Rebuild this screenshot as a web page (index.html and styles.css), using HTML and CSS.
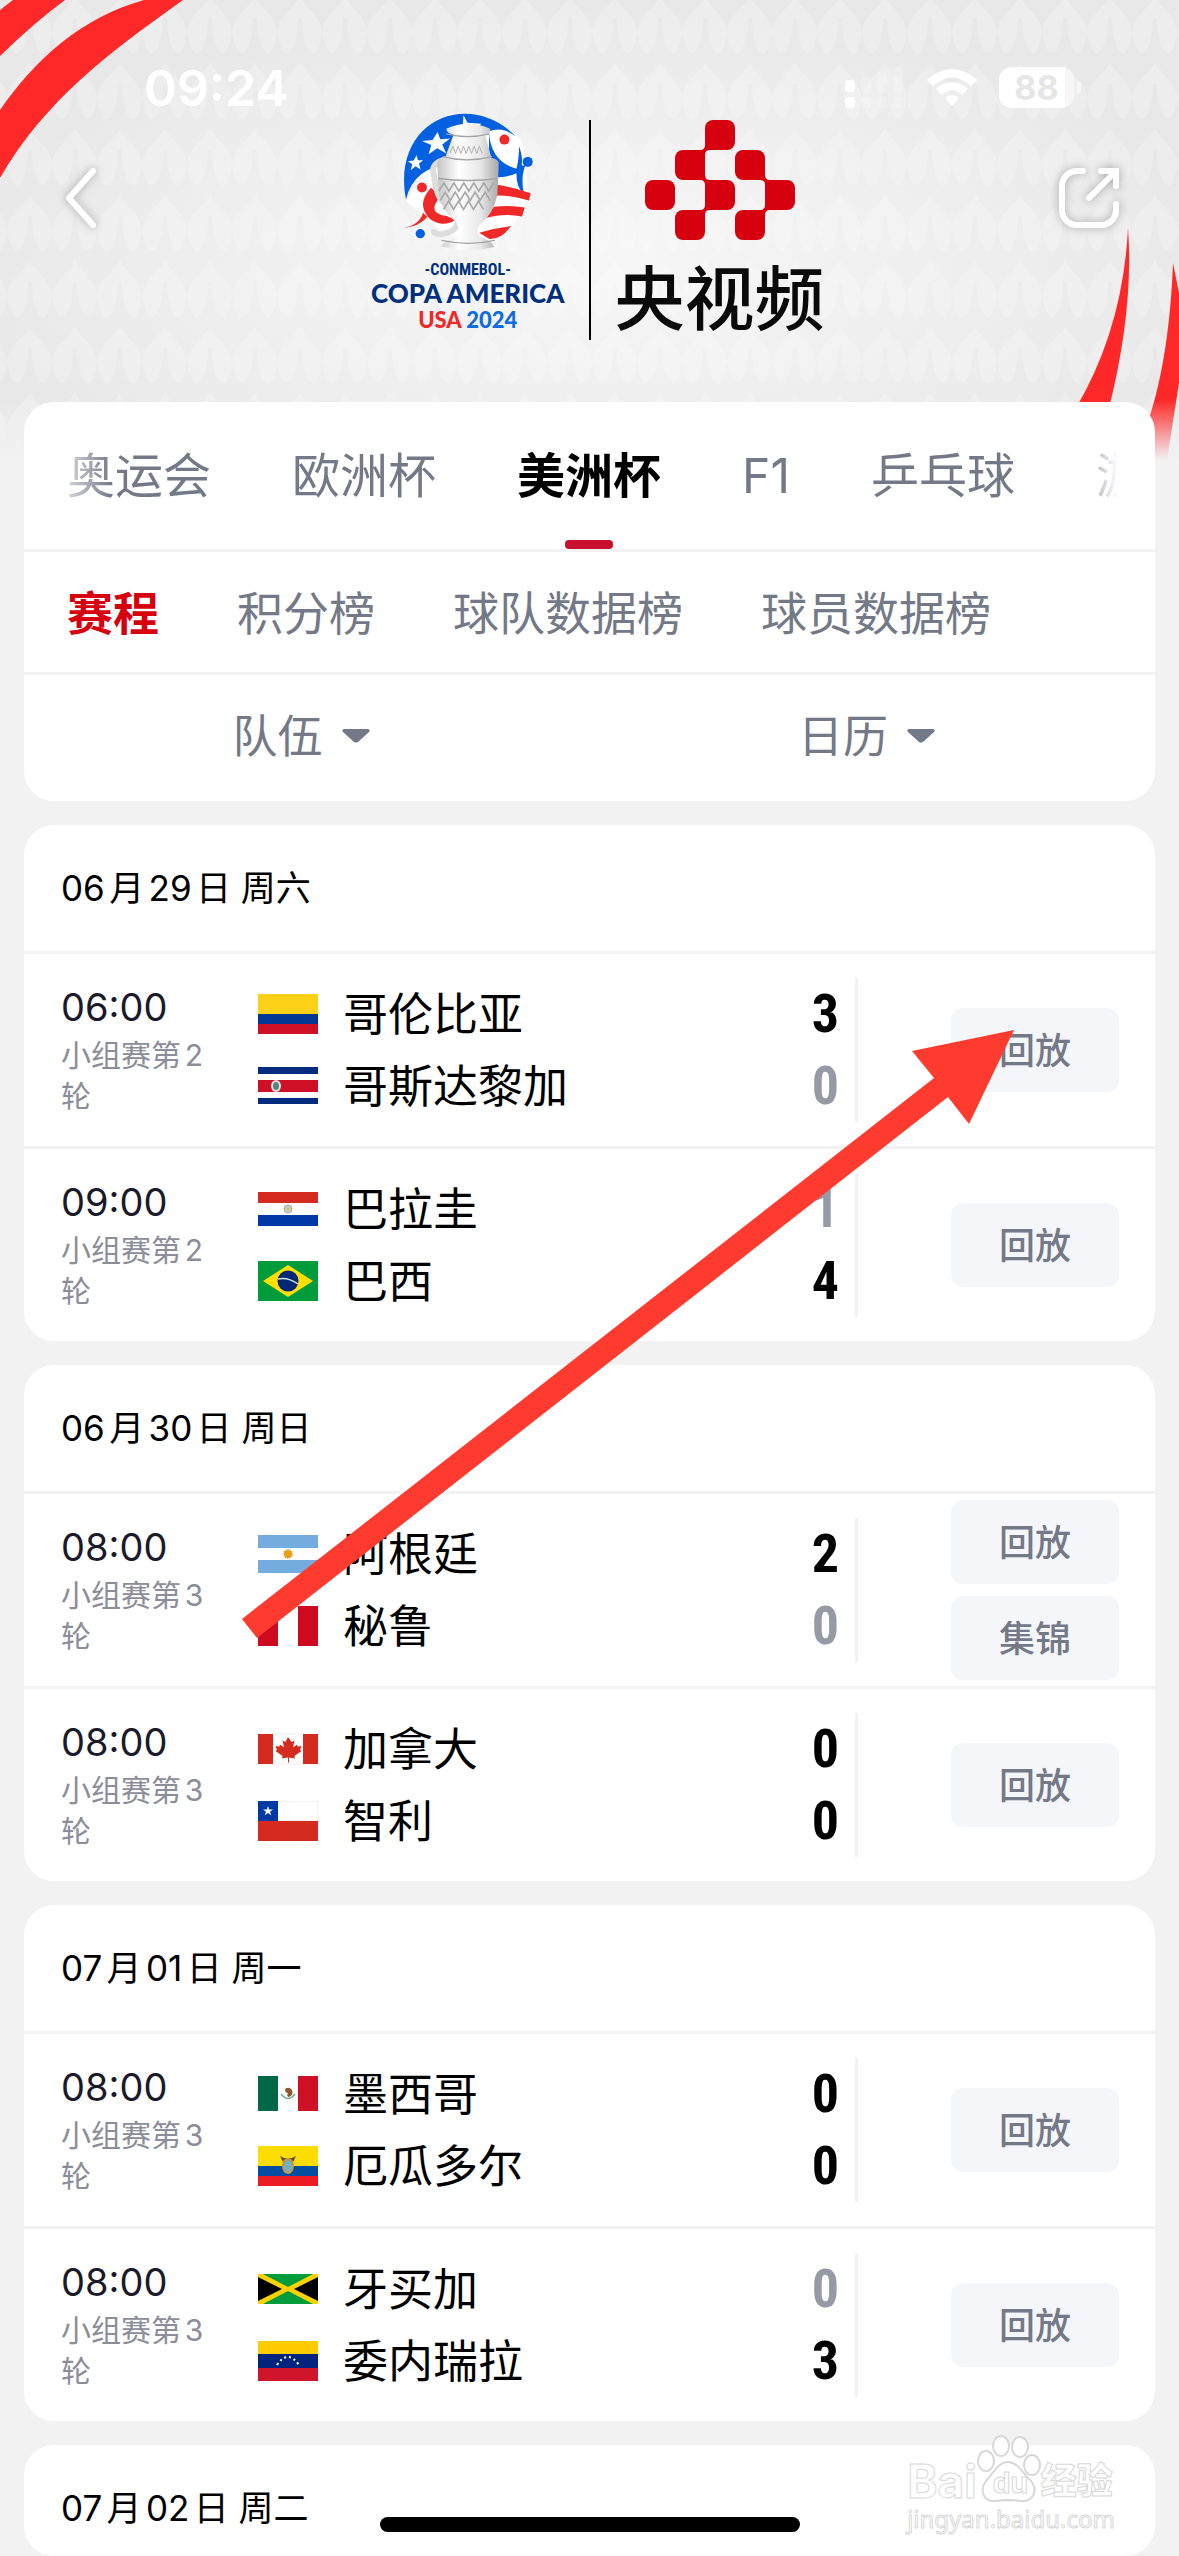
FILE: index.html
```html
<!DOCTYPE html>
<html lang="zh-CN">
<head>
  <meta charset="UTF-8" />
  <meta name="viewport" content="width=device-width, initial-scale=1.0" />
  <title>美洲杯赛程 - 央视频</title>
  <link rel="stylesheet" href="styles.css">
</head>
<body>
  <!-- flags -->
  <svg class="defs" width="0" height="0" aria-hidden="true">
    <symbol id="co" viewBox="0 0 60 40"><path fill="#fcd116" d="M0 0h60v20H0z"/><path fill="#003893" d="M0 20h60v10H0z"/><path fill="#ce1126" d="M0 30h60v10H0z"/></symbol>
    <symbol id="cr" viewBox="0 0 60 40"><path fill="#fff" d="M0 1h60v37H0z"/><path fill="#002b7f" d="M0 1h60v7H0zM0 32h60v6H0z"/><path fill="#ce1126" d="M0 14h60v12H0z"/><ellipse cx="18" cy="20" rx="5" ry="6" fill="#ece5d8"/><ellipse cx="18" cy="20" rx="3" ry="4" fill="#4c8a87"/></symbol>
    <symbol id="py" viewBox="0 0 60 40"><path fill="#fff" d="M0 3h60v34H0z"/><path fill="#d52b1e" d="M0 3h60v11H0z"/><path fill="#0038a8" d="M0 26h60v11H0z"/><circle cx="30" cy="20" r="4" fill="#c9d0c4" stroke="#aaa"/><circle cx="30" cy="20" r="1.500" fill="#d8c640"/></symbol>
    <symbol id="br" viewBox="0 0 60 40"><path fill="#009b3a" d="M0 0h60v40H0z"/><path fill="#fedf00" d="M30 4 55 20 30 36 5 20z"/><circle cx="30" cy="20" r="10.500" fill="#002776"/><path fill="none" stroke="#cfe6dc" stroke-width="1.500" d="M20 18q10-2 20 5"/></symbol>
    <symbol id="ar" viewBox="0 0 60 40"><path fill="#fff" d="M0 1h60v38H0z"/><path fill="#74acdf" d="M0 1h60v13H0zM0 26h60v13H0z"/><circle cx="30" cy="20" r="4" fill="#e8a30c" stroke="#d9a553" stroke-dasharray="1 1" stroke-width="2"/></symbol>
    <symbol id="pe" viewBox="0 0 60 40"><path fill="#fff" d="M0 0h60v40H0z"/><path fill="#ce0a20" d="M0 0h20v40H0zM40 0h20v40H40z"/></symbol>
    <symbol id="ca" viewBox="0 0 60 40"><path fill="#fff" stroke="#eee" d="M1 5h58v30H1z"/><path fill="#d52b1e" d="M0 5h15v30H0zM45 5h15v30H45zM30 8l-2.500 5-3-1.500 1.500 7-4-3-.5 2-4-.5 1.500 4-1.500 1 7 5-.5 2.500 6-1v5h1v-5l6 1-.5-2.500 7-5-1.500-1 1.500-4-4 .5-.5-2-4 3 1.500-7-3 1.500z"/></symbol>
    <symbol id="cl" viewBox="0 0 60 40"><path fill="#fff" stroke="#e6e6e6" d="M0 0h60v20H0z"/><path fill="#d52b1e" d="M0 20h60v20H0z"/><path fill="#0039a6" d="M0 0h20v20H0z"/><path fill="#fff" d="M10 5l1.200 3.500H15l-3 2.200 1.200 3.500-3.200-2.200-3.200 2.200L8 10.700 5 8.500h3.800z"/></symbol>
    <symbol id="mx" viewBox="0 0 60 40"><path fill="#fff" d="M0 2h60v35H0z"/><path fill="#006847" d="M0 2h20v35H0z"/><path fill="#ce1126" d="M40 2h20v35H40z"/><path fill="#8c5a2e" d="M27 15q4-3 7 1 2 5-3 7-3-1-1-4-3 0-3-4z"/><path fill="none" stroke="#6fae9a" stroke-width="1.500" d="M23 20q7 9 14 0"/></symbol>
    <symbol id="ec" viewBox="0 0 60 40"><path fill="#ffdd00" d="M0 0h60v20H0z"/><path fill="#034ea2" d="M0 20h60v10H0z"/><path fill="#ed1c24" d="M0 30h60v10H0z"/><path fill="#5b4a1e" d="M22 10q8 5 16 0l-3 6H25z"/><ellipse cx="30" cy="20" rx="6" ry="8" fill="#c8963e"/><ellipse cx="30" cy="20" rx="4" ry="6" fill="#6fb3c4"/></symbol>
    <symbol id="jm" viewBox="0 0 60 40"><path fill="#009b3a" d="M0 5h60v30H0z"/><path d="M0 5l28 15L0 35zM60 5 32 20l28 15z"/><path fill="#fed100" d="M0 5h5l25 13L55 5h5v3L36 20l24 12v3h-5L30 22 5 35H0v-3l24-12L0 8z"/></symbol>
    <symbol id="ve" viewBox="0 0 60 40"><path fill="#fc0" d="M0 0h60v14H0z"/><path fill="#00247d" d="M0 13h60v14H0z"/><path fill="#cf142b" d="M0 27h60v13H0z"/><path fill="none" stroke="#fff" stroke-width="2" stroke-dasharray="2 3" d="M19 24q11-16 22 0"/></symbol>
  </svg>

  <svg class="backdrop" viewBox="0 0 1179 480" aria-hidden="true">
    <defs>
      <radialGradient id="glow" cx=".5" cy=".55" r=".55">
        <stop offset="0" stop-color="#f7f7f7"/>
        <stop offset="1" stop-color="#e8e8e8"/>
      </radialGradient>
      <linearGradient id="fade" x1="0" y1="0" x2="0" y2="1">
        <stop offset="0" stop-color="#f2f2f2" stop-opacity="0"/>
        <stop offset="1" stop-color="#f2f2f2"/>
      </linearGradient>
      <pattern id="leaves" x="7" y="-4" width="45" height="66" patternUnits="userSpaceOnUse">
        <path fill="#fff" fill-opacity=".2" d="M23 0C18 12 2 18 0 36c1 9 5 18 8 21 8 2 13-16 13-35h4c0 19 5 37 13 35 3-3 6-12 7-21C43 18 28 12 23 0z"/>
      </pattern>
    </defs>
    <path fill="url(#glow)" d="M0 0h1179v480H0z"/>
    <path fill="url(#leaves)" d="M0 0h1179v480H0z"/>
    <!-- ribbons in the corners -->
    <g fill="#ff2828">
      <path d="M13 0h52Q35 22 0 56V10z"/>
      <path d="M144 0h39C110 52 45 100 0 178v-68C35 60 80 18 144 0z"/>
      <path d="M1128 228q6 80-19 180h-33q47-80 52-180z"/>
      <path d="M1173 263l6 30v90l-12 77h-35q36-70 41-197z"/>
    </g>
    <path fill="url(#fade)" d="M0 400h1179v60H0z"/>
    <path fill="#f2f2f2" d="M0 459h1179v21H0z"/>
  </svg>

  <header class="top">
    <div class="status">
      <span class="clock">09:24</span>
      <div class="status-icons">
        <svg width="60" height="42" viewBox="0 0 60 42" fill="#fff">
          <rect y="13" width="10" height="12" rx="4"/><rect y="30" width="10" height="11" rx="4"/>
          <g opacity=".2"><rect x="16" y="10" width="10" height="16" rx="4"/><rect x="32" y="5" width="10" height="21" rx="4"/><rect x="48" width="10" height="26" rx="4"/><rect x="16" y="30" width="10" height="11" rx="4"/><rect x="32" y="30" width="10" height="11" rx="4"/><rect x="48" y="30" width="10" height="11" rx="4"/></g>
        </svg>
        <svg width="50" height="38" viewBox="0 0 50 38" fill="#fff">
          <path d="M0 11Q25-11 50 11l-6 6Q25 0 6 17z"/><path d="M9 20q16-14 32 0l-6 6q-10-9-20 0z"/><path d="M18 29q7-6 14 0l-7 8z"/>
        </svg>
        <span class="battery">88</span>
      </div>
    </div>
    <div class="banner">
      <button class="icon-button" aria-label="返回">
        <svg width="44" height="60" viewBox="0 0 44 60"><path d="M33 3 9 30l24 27" fill="none" stroke="#fff" stroke-width="6" stroke-linecap="round" stroke-linejoin="round"/></svg>
      </button>
      <div class="brand">
        <div class="copa">
          <svg width="133" height="138" viewBox="150 65 400 415">
            <defs>
              <linearGradient id="silver"><stop offset="0" stop-color="#c4c4c4"/><stop offset=".35" stop-color="#fff"/><stop offset=".7" stop-color="#e8e8e8"/><stop offset="1" stop-color="#a9a9a9"/></linearGradient>
            </defs>
            <path fill="#fff" d="M165 330Q240 230 300 110l110 10q100-20 110 60l15 140-50 90-80 40-120-20z"/>
            <path fill="#0360e0" d="M165 325C120 90 350-10 495 135 460 110 440 112 415 120L300 220Q190 225 165 325z"/>
            <path fill="#fff" d="M338 72l12 22 42 3-18 15 8 25-80-20 34-15zM260 122l8 22 30-2-24 18 12 27-27-16-26 18 8-28-28-12 32-3zM197 192l4 15 16 0-13 10 5 18-15-10-15 12 5-18-13-9 17-2z"/>
            <path fill="#0360e0" d="M415 125q5 85 82 108 8-30 8-68 12 32 8 55 5 10 14-4-18 35-8 90-22-15-22-60-50 22-83 4z"/>
            <path fill="#fff" d="M422 130q10 50 72 94 4-34-2-84-30-24-70-10z"/>
            <circle cx="531" cy="212" r="15" fill="#0360e0"/><circle cx="461" cy="145" r="15" fill="#f02828"/>
            <path fill="#f02828" d="M430 280q50 5 110 26l-5 22q-60-18-110-14zM430 347q45-6 92 2l-8 27q-60-12-118 8zM385 425q50-15 96-20-28 40-65 39z"/>
            <path fill="#f02828" d="M240 290q-45 50-5 92 40 30 78 5l-25-12q-65-10-18-60zM157 410q45-5 60-45l12 13q-25 30-72 32z"/>
            <circle cx="213" cy="289" r="15" fill="#f02828"/><circle cx="208" cy="428" r="14" fill="#0360e0"/>
            <path fill="none" stroke="#ddd" stroke-width="18" d="M285 205q-50 10-35 50 5 60 30 80M315 370q20 50-45 60-25 0-20-15"/>
            <path fill="url(#silver)" d="M286 112q66-30 132 0 2 16-15 20l19 68q22 4 22 16l-4 94q-12 60-54 92-20 30 25 46 12 6 20 20-80 20-160-2 10-16 30-20 35-20 14-54-45-35-52-86l-4-90q2-16 25-20l24-66q-20-4-22-18z"/>
            <path fill="none" stroke="#a4a4a4" stroke-width="4" d="M286 128q66 16 130 0M276 196q72 20 148 0M262 262q90 12 180 0M272 448q80 18 160 0"/>
            <path fill="none" stroke="#b0b0b0" stroke-width="3" d="M298 185l8-20 8 22 8-22 8 22 8-22 8 22 8-22 8 22 8-22 8 22 8-22 8 22"/>
            <path fill="none" stroke="#a8a8a8" stroke-width="5" d="M264 300l15-25 15 25 15-25 15 25 15-25 15 25 15-25 15 25 15-25 15 25 15-25M268 328l15-25 15 25 15-25 15 25 15-25 15 25 15-25 15 25 15-25 15 25M278 355l15-25 15 25 15-25 15 25 15-25 15 25 15-25 15 25"/>
          </svg>
          <span class="conmebol">-CONMEBOL-</span>
          <span class="copa-name">COPA AMERICA</span>
          <span class="copa-year"><b>USA</b> 2024</span>
        </div>
        <div class="brand-line"></div>
        <div class="yangshipin">
          <svg width="150" height="120" viewBox="0 0 150 120" fill="#d7000f">
            <defs>
              <path id="joint" d="M0-8h8v8H5Q0 0 0 5v3h-8V0h3Q0 0 0-5z"/>
            </defs>
            <rect x="60" width="30" height="30" rx="8"/><rect x="30" y="30" width="30" height="30" rx="8"/><rect x="90" y="30" width="30" height="30" rx="8"/>
            <rect y="60" width="30" height="30" rx="8"/><rect x="60" y="60" width="30" height="30" rx="8"/><rect x="120" y="60" width="30" height="30" rx="8"/>
            <rect x="30" y="90" width="30" height="30" rx="8"/><rect x="90" y="90" width="30" height="30" rx="8"/>
            <use href="#joint" transform="translate(60 30)"/>
            <use href="#joint" transform="translate(60 60) scale(-1 1)"/>
            <use href="#joint" transform="translate(60 90)"/>
            <use href="#joint" transform="translate(120 60) scale(-1 1)"/>
            <use href="#joint" transform="translate(120 90)"/>
          </svg>
          <span class="ysp-name">央视频</span>
        </div>
      </div>
      <button class="icon-button" aria-label="分享">
        <svg width="60" height="60" viewBox="0 0 60 60" fill="none" stroke="#fff" stroke-width="6" stroke-linecap="round"><path d="M24 3h-6A15 15 0 0 0 3 18v24a15 15 0 0 0 15 15h24a15 15 0 0 0 15-15v-6"/><path d="M42 3h15v15M55 5 30 30"/></svg>
      </button>
    </div>
  </header>

  <main>
    <div class="card">
      <nav class="sports">
        <a href="#">奥运会</a>
        <a href="#">欧洲杯</a>
        <a href="#" class="active">美洲杯</a>
        <a href="#">F1</a>
        <a href="#">乒乓球</a>
        <a href="#">游泳</a>
      </nav>
      <nav class="views">
        <a href="#" class="active">赛程</a>
        <a href="#">积分榜</a>
        <a href="#">球队数据榜</a>
        <a href="#">球员数据榜</a>
      </nav>
      <div class="filters">
        <label class="filter">
          <select aria-label="队伍"><option>队伍</option></select>
          <svg width="28" height="14" viewBox="0 0 28 14"><path fill="#747987" d="M2 0h24q3 1 1 3L16 13q-2 1-4 0L1 3q-2-2 1-3z"/></svg>
        </label>
        <label class="filter">
          <select aria-label="日历"><option>日历</option></select>
          <svg width="28" height="14" viewBox="0 0 28 14"><path fill="#747987" d="M2 0h24q3 1 1 3L16 13q-2 1-4 0L1 3q-2-2 1-3z"/></svg>
        </label>
      </div>
    </div>

    <section class="card">
      <h2>06月29日 周六</h2>
      <div class="match">
        <div class="when"><time>06:00</time><p>小组赛第2轮</p></div>
        <div class="teams">
          <div class="team"><svg class="flag"><use href="#co"/></svg><span>哥伦比亚</span><b>3</b></div>
          <div class="team"><svg class="flag"><use href="#cr"/></svg><span>哥斯达黎加</span><b class="lost">0</b></div>
        </div>
        <div class="actions"><button>回放</button></div>
      </div>
      <div class="match">
        <div class="when"><time>09:00</time><p>小组赛第2轮</p></div>
        <div class="teams">
          <div class="team"><svg class="flag"><use href="#py"/></svg><span>巴拉圭</span><b class="lost">1</b></div>
          <div class="team"><svg class="flag"><use href="#br"/></svg><span>巴西</span><b>4</b></div>
        </div>
        <div class="actions"><button>回放</button></div>
      </div>
    </section>

    <section class="card">
      <h2>06月30日 周日</h2>
      <div class="match">
        <div class="when"><time>08:00</time><p>小组赛第3轮</p></div>
        <div class="teams">
          <div class="team"><svg class="flag"><use href="#ar"/></svg><span>阿根廷</span><b>2</b></div>
          <div class="team"><svg class="flag"><use href="#pe"/></svg><span>秘鲁</span><b class="lost">0</b></div>
        </div>
        <div class="actions"><button>回放</button><button>集锦</button></div>
      </div>
      <div class="match">
        <div class="when"><time>08:00</time><p>小组赛第3轮</p></div>
        <div class="teams">
          <div class="team"><svg class="flag"><use href="#ca"/></svg><span>加拿大</span><b>0</b></div>
          <div class="team"><svg class="flag"><use href="#cl"/></svg><span>智利</span><b>0</b></div>
        </div>
        <div class="actions"><button>回放</button></div>
      </div>
    </section>

    <section class="card">
      <h2>07月01日 周一</h2>
      <div class="match">
        <div class="when"><time>08:00</time><p>小组赛第3轮</p></div>
        <div class="teams">
          <div class="team"><svg class="flag"><use href="#mx"/></svg><span>墨西哥</span><b>0</b></div>
          <div class="team"><svg class="flag"><use href="#ec"/></svg><span>厄瓜多尔</span><b>0</b></div>
        </div>
        <div class="actions"><button>回放</button></div>
      </div>
      <div class="match">
        <div class="when"><time>08:00</time><p>小组赛第3轮</p></div>
        <div class="teams">
          <div class="team"><svg class="flag"><use href="#jm"/></svg><span>牙买加</span><b class="lost">0</b></div>
          <div class="team"><svg class="flag"><use href="#ve"/></svg><span>委内瑞拉</span><b>3</b></div>
        </div>
        <div class="actions"><button>回放</button></div>
      </div>
    </section>

    <section class="card last">
      <h2>07月02日 周二</h2>
    </section>
  </main>

  <svg class="arrow" width="774" height="610" viewBox="0 0 774 610" aria-hidden="true"><path fill="#ff3b30" d="M772 1 670 22l22 27L0 590l15 19L706 68l21 27z"/></svg>

  <div class="watermark">
    <div class="watermark-logo">
      <span>Bai</span>
      <span class="paw">
        <svg width="64" height="70" viewBox="0 0 64 70" fill="#fff" fill-opacity=".8" stroke="#d8d8d8" stroke-width="2"><ellipse cx="9" cy="27" rx="8" ry="10"/><ellipse cx="24" cy="12" rx="8" ry="10"/><ellipse cx="43" cy="13" rx="8" ry="10"/><ellipse cx="55" cy="31" rx="8" ry="10"/><path d="M31 28c10 0 16 13 23 19 8 10 1 21-9 20-8-1-20-1-28 0-10 1-15-11-8-20 6-6 12-19 22-19z"/></svg>
        <i>du</i>
      </span>
      <span class="jingyan">经验</span>
    </div>
    <div class="watermark-url">jingyan.baidu.com</div>
  </div>
  <div class="home-bar"></div>
</body>
</html>
```
FILE: styles.css
```css
* {
  box-sizing: border-box;
}

body {
  margin: 0;
  position: relative;
  height: 100vh;
  display: flex;
  flex-direction: column;
  overflow: hidden;
  background: #f2f2f2;
  color: #000;
  font-family: Inter, "Noto Sans CJK SC", sans-serif;
  text-autospace: normal;
}

h2, p {
  margin: 0;
}

a {
  color: inherit;
  text-decoration: none;
}

button, select {
  border: none;
  padding: 0;
  font-family: inherit;
  cursor: pointer;
}

.defs {
  position: absolute;
}

.backdrop {
  position: absolute;
  top: 0;
  left: 0;
  width: 100%;
  z-index: -1;
}

/* header */
.top {
  height: 402px;
  flex: none;
  padding: 62px 60px 0;
}

.status {
  display: flex;
  justify-content: space-between;
  align-items: center;
  height: 51px;
  padding: 0 45px 0 84px;
  color: #fff;
}

.clock {
  font-size: 50px;
  font-weight: 600;
}

.status-icons {
  display: flex;
  align-items: center;
  gap: 22px;
}

.battery {
  position: relative;
  width: 75px;
  border-radius: 13px;
  background: linear-gradient(90deg, #fff 88%, #f6f6f6 88%);
  color: #e6e6e6;
  font-size: 34px;
  font-weight: 700;
  line-height: 41px;
  text-align: center;
}

.battery::after {
  content: "";
  position: absolute;
  top: 14px;
  right: -7px;
  width: 4px;
  height: 13px;
  border-radius: 0 6px 6px 0;
  background: #f6f6f6;
}

.banner {
  display: flex;
  justify-content: space-between;
}

.icon-button {
  width: 60px;
  height: 60px;
  margin-top: 55px;
  background: none;
  text-align: left;
}

.icon-button svg {
  display: block;
  overflow: visible;
  filter: drop-shadow(0 0 5px rgba(0, 0, 0, 0.3));
}

.brand {
  display: grid;
  grid-template-columns: 210px 2px 210px;
  column-gap: 24px;
}

.copa {
  display: flex;
  flex-direction: column;
  align-items: center;
  justify-self: end;
  color: #00307d;
  font-family: Lato, sans-serif;
  white-space: nowrap;
}

.conmebol {
  margin-top: 10px;
  font: bold 16px/18px "Liberation Sans Narrow", "Roboto Condensed", "DejaVu Sans Condensed", sans-serif;
}

.copa-name {
  font-size: 26px;
  font-weight: 900;
  line-height: 28px;
}

.copa-year {
  font-size: 22px;
  font-weight: 900;
  line-height: 26px;
  color: #0f6be0;
}

.copa-year b {
  color: #f02828;
}

.brand-line {
  height: 220px;
  margin-top: 7px;
  background: #000;
}

.yangshipin {
  display: flex;
  flex-direction: column;
  align-items: center;
  padding-top: 7px;
}

.ysp-name {
  margin-top: 20px;
  font-size: 70px;
  font-weight: 500;
  line-height: 80px;
  color: #0a0a0a;
}

/* cards */
main {
  flex: 1;
  min-height: 0;
  display: flex;
  flex-direction: column;
  gap: 24px;
  padding: 0 24px;
}

.card {
  flex: none;
  background: #fff;
  border-radius: 30px;
  overflow: hidden;
}

.card.last {
  flex: 1;
  min-height: 0;
}

.sports, .views {
  display: flex;
  align-items: center;
  color: #747987;
}

.sports {
  height: 147px;
  margin: 0 37px 0 43px;
  gap: 81px;
  overflow: hidden;
  font-size: 48px;
  white-space: nowrap;
  -webkit-mask-image: linear-gradient(90deg, transparent -20px, #000 45px, #000 calc(100% - 45px), transparent);
  mask-image: linear-gradient(90deg, transparent -20px, #000 45px, #000 calc(100% - 45px), transparent);
}

.sports a {
  position: relative;
  line-height: 147px;
}

.sports .active {
  color: #000;
  font-weight: 700;
}

.sports .active::after {
  content: "";
  position: absolute;
  left: 50%;
  bottom: 0;
  width: 48px;
  height: 9px;
  margin-left: -24px;
  border-radius: 4px;
  background: #c8102e;
}

.views {
  height: 126px;
  padding: 0 43px 4px;
  gap: 78px;
  border-top: 3px solid #f2f2f2;
  border-bottom: 3px solid #f2f2f2;
  font-size: 46px;
}

.views .active {
  color: #d7000f;
  font-weight: 700;
}

.filters {
  display: grid;
  grid-template-columns: 49% 51%;
  height: 126px;
  padding-bottom: 4px;
  color: #747987;
}

.filter {
  display: flex;
  justify-content: center;
  align-items: center;
  gap: 18px;
}

.filter select {
  appearance: none;
  background: none;
  color: inherit;
  font-size: 45px;
}

/* match list */
.card h2 {
  padding-left: 37px;
  font-size: 35px;
  font-weight: 400;
  line-height: 126px;
}

.match {
  display: grid;
  grid-template-columns: 197px 1fr 261px;
  align-items: center;
  height: 195px;
  padding: 0 36px 0 37px;
  border-top: 3px solid #f2f2f2;
}

.when time {
  display: block;
  margin-bottom: 4px;
  font-size: 38px;
  line-height: 48px;
  color: #1a1a2a;
}

.when p {
  width: 150px;
  font-size: 30px;
  line-height: 41px;
  color: #8b8d98;
}

.teams {
  padding-right: 16px;
  border-right: 3px solid #f0f2f8;
}

.team {
  display: flex;
  align-items: center;
  gap: 25px;
  height: 72px;
  font-size: 45px;
}

.team span {
  padding-bottom: 6px;
}

.flag {
  width: 60px;
  height: 40px;
}

.team b {
  margin-left: auto;
  font: bold 54px/72px "Liberation Sans Narrow", "Roboto Condensed", "Open Sans Condensed", sans-serif;
}

.team .lost {
  color: #969aa4;
}

.actions {
  display: flex;
  flex-direction: column;
  align-items: flex-end;
  gap: 12px;
}

.actions button {
  width: 168px;
  height: 84px;
  padding-bottom: 4px;
  border-radius: 12px;
  background: #f4f6fa;
  color: #747987;
  font-size: 36px;
  font-weight: 500;
}

/* things lying over the page */
.arrow {
  position: absolute;
  top: 1029px;
  left: 242px;
}

.home-bar {
  position: absolute;
  left: 50%;
  bottom: 24px;
  width: 420px;
  height: 15px;
  margin-left: -210px;
  border-radius: 8px;
  background: #000;
}

.watermark {
  position: absolute;
  right: 64px;
  bottom: 22px;
  color: #fff;
  -webkit-text-stroke: 1px #d8d8d8;
}

.watermark-logo {
  display: flex;
  align-items: flex-end;
  font-size: 46px;
  font-weight: 700;
  line-height: 46px;
}

.paw {
  position: relative;
  height: 70px;
}

.paw i {
  position: absolute;
  left: 16px;
  bottom: 6px;
  font-size: 28px;
  font-style: normal;
  line-height: 30px;
}

.jingyan {
  font-size: 36px;
  font-weight: 900;
}

.watermark-url {
  font: 24px/30px "Noto Sans", sans-serif;
}
```
